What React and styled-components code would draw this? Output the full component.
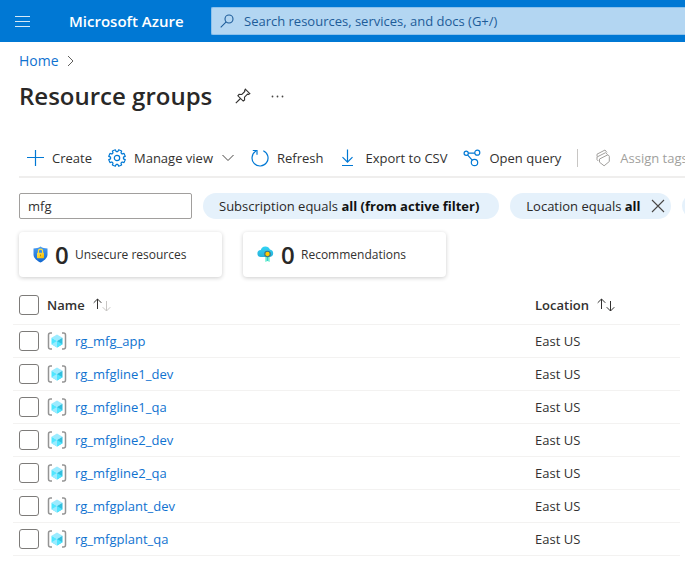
import React from "react";
import styled, { createGlobalStyle } from "styled-components";

const GlobalStyle = createGlobalStyle`
  * { box-sizing: border-box; }
  body {
    margin: 0;
    background: #fff;
    color: #323130;
    font-family: "Open Sans", "Noto Sans", sans-serif;
    font-size: 13px;
    line-height: 20px;
    overflow-x: hidden;
  }
  button, input { font: inherit; color: inherit; }
  h1 { margin: 0; }
`;

const Page = styled.div`
  overflow: hidden;
`;

const TopBar = styled.header`
  display: flex;
  align-items: center;
  height: 42px;
  padding-left: 14px;
  background: #0078d4;
`;

const IconButton = styled.button`
  display: flex;
  align-items: center;
  justify-content: center;
  flex: none;
  padding: 0;
  border: 0;
  background: none;
`;

const Brand = styled.a`
  width: 142px;
  margin-left: 38px;
  flex: none;
  color: #fff;
  font-size: 15px;
  font-weight: 600;
  text-decoration: none;
  white-space: nowrap;
`;

const SearchBox = styled.label`
  display: flex;
  align-items: center;
  flex: 1;
  gap: 10px;
  height: 28px;
  padding-left: 8px;
  border: 1px solid #8cc1ec;
  border-right: 0;
  border-radius: 2px 0 0 2px;
  background: #b3d6f2;
`;

const SearchInput = styled.input`
  flex: 1;
  min-width: 0;
  padding: 0;
  border: 0;
  outline: 0;
  background: none;
  &::placeholder { color: #1d5c99; opacity: 1; }
`;

const Content = styled.main`
  padding-left: 19px;
`;

const Breadcrumb = styled.nav`
  display: flex;
  align-items: center;
  gap: 8px;
  padding-top: 9px;
  font-size: 14px;
`;

const Link = styled.a`
  color: #0f72d0;
  text-decoration: none;
`;

const TitleRow = styled.div`
  display: flex;
  align-items: center;
  gap: 20px;
  height: 50px;
`;

const Title = styled.h1`
  width: 196px;
  color: #292827;
  font-size: 24px;
  font-weight: 600;
  line-height: 32px;
  white-space: nowrap;
`;

const Toolbar = styled.div`
  display: flex;
  align-items: center;
  gap: 16px;
  height: 38px;
  margin-top: 19px;
  padding-left: 7px;
  border-bottom: 2px solid #efeeed;
`;

const ToolButton = styled.button`
  display: flex;
  align-items: center;
  flex: none;
  gap: 8px;
  padding: 0;
  border: 0;
  background: none;
  color: ${(p) => (p.disabled ? "#a19f9d" : "#323130")};
  white-space: nowrap;
`;

const Divider = styled.span`
  flex: none;
  width: 1px;
  height: 18px;
  background: #c8c6c4;
`;

const Filters = styled.div`
  display: flex;
  align-items: center;
  gap: 11px;
  margin-top: 15px;
`;

const FilterInput = styled.input`
  flex: none;
  width: 173px;
  height: 26px;
  padding: 0 8px;
  border: 1px solid #a19f9d;
  border-radius: 2px;
  outline: 0;
`;

const Pill = styled.div`
  display: flex;
  align-items: center;
  flex: none;
  gap: 10px;
  height: 26px;
  padding: 0 ${(p) => (p.$closable ? 6 : 20)}px 0 16px;
  border-radius: 13px;
  background: #e5f1fb;
  color: #292827;
  white-space: nowrap;
  b { color: #111; font-weight: 700; }
`;

const Cards = styled.div`
  display: flex;
  gap: 21px;
  margin-top: 13px;
`;

const Card = styled.section`
  display: flex;
  align-items: center;
  width: 203px;
  height: 45px;
  padding-left: 14px;
  border-radius: 4px;
  background: #fff;
  box-shadow: 0 1px 4px rgba(0, 0, 0, 0.2);
  font-size: 12px;
`;

const Count = styled.span`
  width: 20px;
  margin-left: 7px;
  color: #292827;
  font-size: 24px;
  font-weight: 600;
  line-height: 32px;
`;

const Table = styled.table`
  width: calc(100% - 5px - 13px);
  margin: 9px 0 0 13px;
  border-collapse: collapse;
  table-layout: fixed;
`;

const HeadCell = styled.th`
  width: ${(p) => p.$width || "auto"};
  height: 38px;
  padding: 0;
  border-bottom: 1px solid #f3f2f1;
  font-weight: 600;
  text-align: left;
`;

const Cell = styled.td`
  height: 33px;
  padding: 0;
  border-bottom: 1px solid #f3f2f1;
`;

const Inline = styled.div`
  display: flex;
  align-items: center;
  gap: 8px;
`;

const Check = styled.input`
  appearance: none;
  display: block;
  width: 20px;
  height: 20px;
  margin: 0 0 0 6px;
  border: 1px solid #7d7b79;
  border-radius: 3px;
  background: #fff;
`;

function Svg({ w = 18, h = 18, color = "#0078d4", sw = 1.2, children }) {
  return (
    <svg width={w} height={h} viewBox={`0 0 ${w} ${h}`} fill="none" stroke={color}
      strokeWidth={sw} aria-hidden="true">
      {children}
    </svg>
  );
}

const MenuIcon = () => (
  <Svg w={17} h={12} color="#d5e9f8" sw={1}><path d="M1 1.5h15M1 6.5h15M1 11.5h15" /></Svg>
);
const SearchIcon = () => (
  <Svg w={14} h={14} color="#1d5c99" sw={1.1}><circle cx="9" cy="5" r="4" /><path d="M6.2 7.8L.7 13.3" /></Svg>
);
const CrumbIcon = () => (
  <Svg w={7} h={12} color="#605e5c" sw={1}><path d="M1 1l5 5-5 5" /></Svg>
);
const PinIcon = () => (
  <Svg w={16} h={16} color="#323130" sw={1.1}>
    <path d="M10.3 1.2l4.5 4.5-1.3.7-1-.2-3 3 .1 2.7-1.4 1.2-5.3-5.3 1.2-1.4 2.7.1 3-3-.2-1zM5.5 10.5L.8 15.2" />
  </Svg>
);
const MoreIcon = () => (
  <svg width="13" height="3" fill="#484644" aria-hidden="true">
    <circle cx="1.5" cy="1.5" r=".9" /><circle cx="6.5" cy="1.5" r=".9" /><circle cx="11.5" cy="1.5" r=".9" />
  </svg>
);
const PlusIcon = () => <Svg><path d="M9.5 1v16M1 8.5h17" /></Svg>;

const gearPath = (() => {
  const points = [];
  for (let i = 0; i < 8; i += 1) {
    [[-15, 6.5], [-11, 8.4], [11, 8.4], [15, 6.5]].forEach(([offset, radius]) => {
      const a = ((i * 45 + 22.5 + offset) * Math.PI) / 180;
      points.push(`${(9 + radius * Math.cos(a)).toFixed(2)} ${(9 + radius * Math.sin(a)).toFixed(2)}`);
    });
  }
  return `M${points.join("L")}Z`;
})();
const GearIcon = () => (
  <Svg><path d={gearPath} strokeLinejoin="round" /><circle cx="9" cy="9" r="2.7" /></Svg>
);
const ChevronIcon = () => (
  <Svg w={14} h={8} color="#484644" sw={1}><path d="M1.5 1L7 6.5 12.5 1" /></Svg>
);
const RefreshIcon = () => (
  <Svg><path d="M12.3 1.7A8 8 0 1 1 5 2.1M1.8 1.5H6V5.7" /></Svg>
);
const ExportIcon = () => (
  <Svg><path d="M8.5 .5v12.5M3.5 8.2l5 5 5-5M3 16.5h11" /></Svg>
);
const QueryIcon = () => (
  <Svg><circle cx="3.2" cy="4.2" r="2.1" /><circle cx="14.3" cy="3.7" r="2.5" /><circle cx="11.5" cy="13.5" r="3.2" /><path d="M5.3 4.2h6.5M4.5 5.9l4.7 5.3" /></Svg>
);
const TagsIcon = () => (
  <Svg color="#a19f9d" sw={1}>
    <path d="M5.5 10l8.5-4.3 1.3 1.6v5.2L10.100 16.800l-4.600-3.600zM4.300 12L3 10.700V8l8.500-4.300 2 1.800M3 7.500V5.200L11 1l2 2.500" />
  </Svg>
);
const CloseIcon = () => (
  <Svg w={14} h={14} color="#484644" sw={1.1}><path d="M1 1l12 12M13 1L1 13" /></Svg>
);

const ShieldIcon = () => (
  <svg width="15" height="17" viewBox="0 0 15 17" aria-hidden="true">
    <defs>
      <linearGradient id="shield" x1="0" y1="0" x2="0" y2="1"><stop stopColor="#4a9df2" /><stop offset="1" stopColor="#1267cf" /></linearGradient>
      <linearGradient id="lock" x1="0" y1="0" x2="1" y2="1"><stop stopColor="#ffe452" /><stop offset="1" stopColor="#f5b800" /></linearGradient>
    </defs>
    <path d="M7.5 .5C5.5 2 3.2 2.3 .5 2.4v6c0 4 4 6.3 7 8.1 3-1.8 7-4.1 7-8.1v-6C11.8 2.3 9.5 2 7.5 .5z" fill="url(#shield)" />
    <path d="M5.4 7V5.3a2.1 2.1 0 0 1 4.2 0V7" fill="none" stroke="#ffdc3d" strokeWidth="1.2" />
    <rect x="4" y="6.7" width="7" height="5.5" rx=".6" fill="url(#lock)" />
    <path d="M7.5 8.5v1.8" stroke="#c48f00" />
  </svg>
);
const CloudIcon = () => (
  <svg width="17" height="17" viewBox="0 0 17 17" aria-hidden="true">
    <defs><linearGradient id="cloud" x1="0" y1="0" x2="0" y2="1"><stop stopColor="#32d4f5" /><stop offset="1" stopColor="#28b1da" /></linearGradient></defs>
    <path d="M4 11a3.5 3.5 0 0 1-.2-7A4.8 4.8 0 0 1 12.9 3.500a3.800 3.800 0 0 1 .2 7.500z" fill="url(#cloud)" />
    <path d="M8.3 10v6l2.200-1 2.200 1v-6z" fill="#6bf0cf" />
    <path d="M10.5 10.500v4.500" stroke="#28b1da" strokeWidth=".7" />
    <circle cx="10.5" cy="8" r="2.7" fill="#ffca00" stroke="#3a7287" strokeWidth="1.1" />
  </svg>
);
const GroupIcon = () => (
  <svg width="20" height="18" viewBox="0 0 20 18" aria-hidden="true">
    <path d="M5 1H3.5Q1.5 1 1.5 3v12q0 2 2 2H5M15 1h1.5q2 0 2 2v12q0 2-2 2H15" fill="none" stroke="#949494" strokeWidth="1.5" />
    <path d="M10 2.500l5.500 3.200L10 9 4.500 5.700z" fill="#9cebff" />
    <path d="M4.500 5.700L10 9v6.500l-5.500-3.200z" fill="#50e6ff" />
    <path d="M15.500 5.700L10 9v6.500l5.500-3.200z" fill="#32bedd" />
    <path d="M4.500 12.300L10 9v6.500z" fill="#9cebff" />
    <path d="M15.500 12.300L10 9v6.500z" fill="#50e6ff" />
  </svg>
);
const SortIcon = ({ single }) => (
  <svg width="18" height="14" viewBox="0 0 18 14" fill="none" stroke="#323130" aria-hidden="true">
    <path d="M4.5 11V1M.7 4.8L4.5 1l3.8 3.8" />
    <path d="M13.5 3v10M9.7 9.2l3.8 3.8 3.8-3.8" stroke={single ? "#c8c6c4" : "#323130"} />
  </svg>
);

const groups = [
  "rg_mfg_app", "rg_mfgline1_dev", "rg_mfgline1_qa", "rg_mfgline2_dev",
  "rg_mfgline2_qa", "rg_mfgplant_dev", "rg_mfgplant_qa",
];

const GroupTable = () => (
  <Table>
    <thead>
      <tr>
        <HeadCell $width="34px"><Check type="checkbox" aria-label="Select all" /></HeadCell>
        <HeadCell><Inline>Name <SortIcon single /></Inline></HeadCell>
        <HeadCell $width="145px"><Inline>Location <SortIcon /></Inline></HeadCell>
      </tr>
    </thead>
    <tbody>
      {groups.map((name) => (
        <tr key={name}>
          <Cell><Check type="checkbox" aria-label={`Select ${name}`} /></Cell>
          <Cell><Inline><GroupIcon /><Link href="#">{name}</Link></Inline></Cell>
          <Cell>East US</Cell>
        </tr>
      ))}
    </tbody>
  </Table>
);

export default function App() {
  return (
    <Page>
      <GlobalStyle />
      <TopBar>
        <IconButton aria-label="Menu"><MenuIcon /></IconButton>
        <Brand href="#">Microsoft Azure</Brand>
        <SearchBox>
          <SearchIcon />
          <SearchInput type="text" aria-label="Search" placeholder="Search resources, services, and docs (G+/)" />
        </SearchBox>
      </TopBar>
      <Content>
        <Breadcrumb><Link href="#">Home</Link><CrumbIcon /></Breadcrumb>
        <TitleRow>
          <Title>Resource groups</Title>
          <IconButton aria-label="Pin"><PinIcon /></IconButton>
          <IconButton aria-label="More"><MoreIcon /></IconButton>
        </TitleRow>
        <Toolbar>
          <ToolButton><PlusIcon />Create</ToolButton>
          <ToolButton><GearIcon />Manage view<ChevronIcon /></ToolButton>
          <ToolButton><RefreshIcon />Refresh</ToolButton>
          <ToolButton><ExportIcon />Export to CSV</ToolButton>
          <ToolButton><QueryIcon />Open query</ToolButton>
          <Divider />
          <ToolButton disabled><TagsIcon />Assign tags</ToolButton>
        </Toolbar>
        <Filters>
          <FilterInput type="text" aria-label="Filter" defaultValue="mfg" />
          <Pill><span>Subscription equals <b>all (from active filter)</b></span></Pill>
          <Pill $closable>
            <span>Location equals <b>all</b></span>
            <IconButton aria-label="Remove location filter"><CloseIcon /></IconButton>
          </Pill>
          <Pill />
        </Filters>
        <Cards>
          <Card><ShieldIcon /><Count>0</Count>Unsecure resources</Card>
          <Card><CloudIcon /><Count>0</Count>Recommendations</Card>
        </Cards>
      </Content>
      <GroupTable />
    </Page>
  );
}
